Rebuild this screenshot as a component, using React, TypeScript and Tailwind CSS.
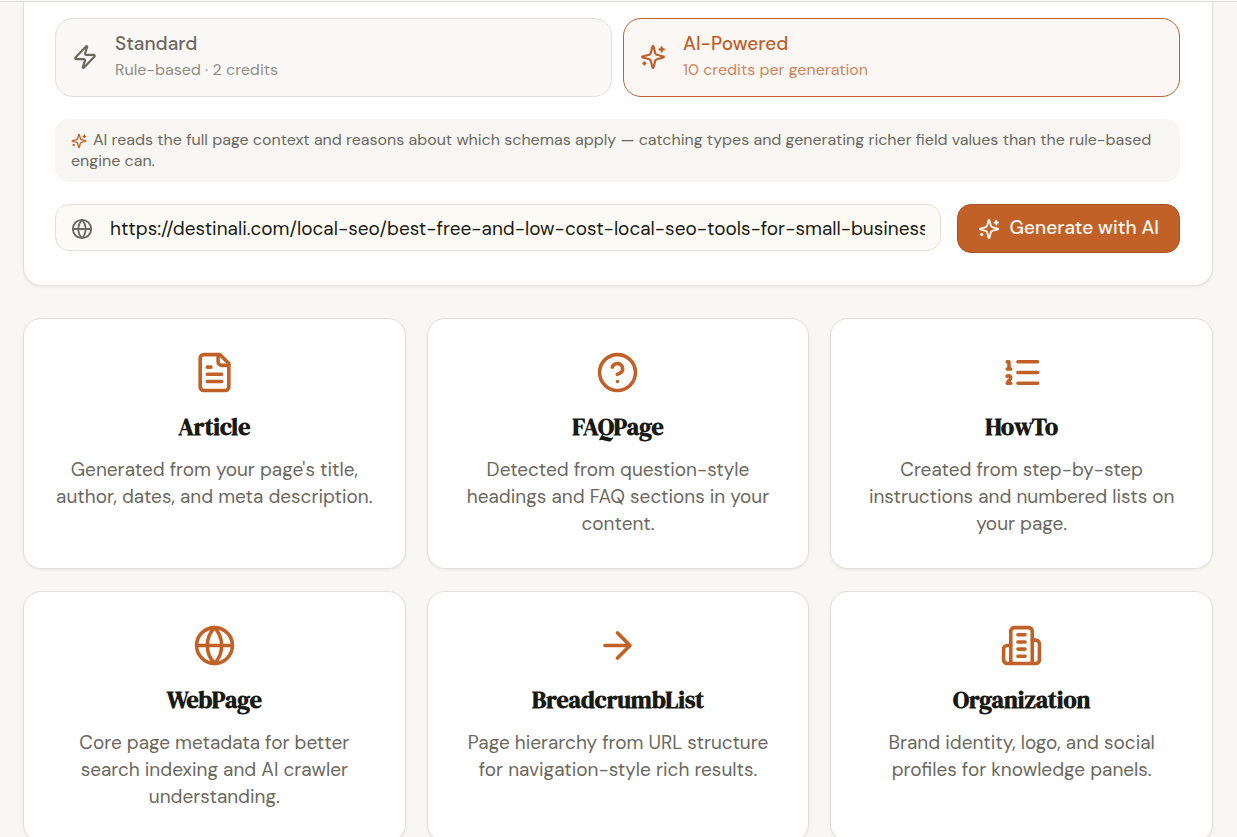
import { useState } from "react";
import type { ReactNode } from "react";

type IconProps = { className?: string; children: ReactNode };

function Icon({ className, children }: IconProps) {
  return (
    <svg
      viewBox="0 0 24 24"
      fill="none"
      stroke="currentColor"
      strokeWidth={2}
      strokeLinecap="round"
      strokeLinejoin="round"
      aria-hidden="true"
      className={className}
    >
      {children}
    </svg>
  );
}

const sparkles = (
  <>
    <path d="M9.937 15.5A2 2 0 0 0 8.5 14.063l-6.135-1.582a.5.5 0 0 1 0-.962L8.5 9.936A2 2 0 0 0 9.937 8.5l1.582-6.135a.5.5 0 0 1 .963 0L14.063 8.5A2 2 0 0 0 15.5 9.937l6.135 1.581a.5.5 0 0 1 0 .964L15.5 14.063a2 2 0 0 0-1.437 1.437l-1.582 6.135a.5.5 0 0 1-.963 0z" />
    <path d="M20 3v4M22 5h-4M4 17v2M5 18H3" />
  </>
);

const globe = (
  <>
    <circle cx="12" cy="12" r="10" />
    <path d="M12 2a14.5 14.5 0 0 0 0 20 14.5 14.5 0 0 0 0-20M2 12h20" />
  </>
);

const zap = (
  <path d="M4 14a1 1 0 0 1-.78-1.63l9.9-10.2a.5.5 0 0 1 .86.46l-1.92 6.02A1 1 0 0 0 13 10h7a1 1 0 0 1 .78 1.63l-9.9 10.2a.5.5 0 0 1-.86-.46l1.92-6.02A1 1 0 0 0 11 14z" />
);

const schemas = [
  {
    name: "Article",
    text: "Generated from your page's title, author, dates, and meta description.",
    icon: (
      <>
        <path d="M15 2H6a2 2 0 0 0-2 2v16a2 2 0 0 0 2 2h12a2 2 0 0 0 2-2V7Z" />
        <path d="M14 2v4a2 2 0 0 0 2 2h4M10 9H8M16 13H8M16 17H8" />
      </>
    ),
  },
  {
    name: "FAQPage",
    text: "Detected from question-style headings and FAQ sections in your content.",
    icon: (
      <>
        <circle cx="12" cy="12" r="10" />
        <path d="M9.09 9a3 3 0 0 1 5.83 1c0 2-3 3-3 3M12 17h.01" />
      </>
    ),
  },
  {
    name: "HowTo",
    text: "Created from step-by-step instructions and numbered lists on your page.",
    icon: <path d="M10 6h11M10 12h11M10 18h11M4 6h1v4M4 10h2M6 18H4c0-1 2-2 2-3s-1-1.5-2-1" />,
  },
  {
    name: "WebPage",
    text: "Core page metadata for better search indexing and AI crawler understanding.",
    icon: globe,
  },
  {
    name: "BreadcrumbList",
    text: "Page hierarchy from URL structure for navigation-style rich results.",
    icon: <path d="M5 12h14M12 5l7 7-7 7" />,
  },
  {
    name: "Organization",
    text: "Brand identity, logo, and social profiles for knowledge panels.",
    icon: (
      <>
        <path d="M6 22V4a2 2 0 0 1 2-2h8a2 2 0 0 1 2 2v18Z" />
        <path d="M6 12H4a2 2 0 0 0-2 2v6a2 2 0 0 0 2 2h2M18 9h2a2 2 0 0 1 2 2v9a2 2 0 0 1-2 2h-2" />
        <path d="M10 6h4M10 10h4M10 14h4M10 18h4" />
      </>
    ),
  },
];

const modes = [
  { id: "standard", title: "Standard", detail: "Rule-based · 2 credits", icon: zap },
  { id: "ai", title: "AI-Powered", detail: "10 credits per generation", icon: sparkles },
];

export default function App() {
  const [mode, setMode] = useState("ai");
  const [url, setUrl] = useState(
    "https://destinali.com/local-seo/best-free-and-low-cost-local-seo-tools-for-small-businesses",
  );

  return (
    <div className="min-h-screen bg-[#f8f7f4] font-['DM_Sans',Inter,sans-serif] text-[#6b6860]">
      <header className="h-[2px] border-b border-[#e0dfdb] bg-[#fbfaf8]" />
      <main className="flex flex-col gap-8 pb-8 pl-[23px] pr-6">
        <section className="flex flex-col gap-[22px] rounded-b-[18px] border border-t-0 border-[#e2e1dd] bg-white pb-8 pl-[31px] pr-8 pt-4 shadow-[0_1px_3px_rgba(0,0,0,0.07)]">
          <div className="grid gap-[11px] sm:grid-cols-2">
            {modes.map((m) => (
              <button
                key={m.id}
                type="button"
                aria-pressed={mode === m.id}
                onClick={() => setMode(m.id)}
                className={
                  mode === m.id
                    ? "flex items-center gap-[17px] rounded-[18px] border border-[#c1622f] bg-[#fbf7f4] px-4 pb-[13px] pt-3 text-left text-[#bd5f2b]"
                    : "flex items-center gap-[17px] rounded-[18px] border border-[#e2e1dd] bg-[#faf9f7] px-4 pb-[13px] pt-3 text-left text-[#6b6860]"
                }
              >
                <Icon className="size-[26px] shrink-0">{m.icon}</Icon>
                <span className="flex flex-col">
                  <span className="text-[19px] font-medium leading-[26px]">{m.title}</span>
                  <span className="text-[16px] leading-[26px] opacity-75">{m.detail}</span>
                </span>
              </button>
            ))}
          </div>

          <p className="rounded-[14px] bg-[#f7f6f3] px-4 pb-[11px] pt-[10px] text-[16px] leading-[21px]">
            <Icon className="mr-[6px] inline size-4 align-[-4px] text-[#c26127]">{sparkles}</Icon>
            AI reads the full page context and reasons about which schemas apply — catching types and
            generating richer field values than the rule-based engine can.
          </p>

          <form
            className="flex flex-wrap items-start gap-4 sm:flex-nowrap"
            onSubmit={(e) => e.preventDefault()}
          >
            <label className="flex h-[47px] min-w-0 grow items-center gap-[17px] rounded-[14px] border border-[#e2e1d8] bg-[#fbfaf4] px-[15px] pt-[2px]">
              <Icon className="size-[22px] shrink-0">{globe}</Icon>
              <input
                type="text"
                aria-label="Page URL"
                value={url}
                onChange={(e) => setUrl(e.target.value)}
                className="min-w-0 grow bg-transparent text-[19px] leading-7 text-[#1a1a14] outline-none"
              />
            </label>
            <button
              type="submit"
              className="flex h-[49px] shrink-0 items-center gap-[10px] rounded-[14px] border border-[#a9542a] bg-[#c26127] px-5 text-[19px] font-medium text-[#fdf8f2]"
            >
              <Icon className="size-[22px]">{sparkles}</Icon>
              Generate with AI
            </button>
          </form>
        </section>

        <section className="grid gap-x-[21px] gap-y-[22px] sm:grid-cols-2 lg:grid-cols-3">
          {schemas.map((s) => (
            <article
              key={s.name}
              className="flex flex-col items-center rounded-[18px] border border-[#e2e1dd] bg-white px-[31px] pb-[31px] pt-8 text-center shadow-[0_1px_3px_rgba(0,0,0,0.07)]"
            >
              <Icon className="size-[43px] text-[#c26127]">{s.icon}</Icon>
              <h3 className="mt-[15px] font-['DM_Serif_Display','Liberation_Serif',serif] text-[24px] font-bold leading-9 text-[#1a1a14]">
                {s.name}
              </h3>
              <p className="mt-[11px] text-[19px] leading-[27px]">{s.text}</p>
            </article>
          ))}
        </section>
      </main>
    </div>
  );
}
